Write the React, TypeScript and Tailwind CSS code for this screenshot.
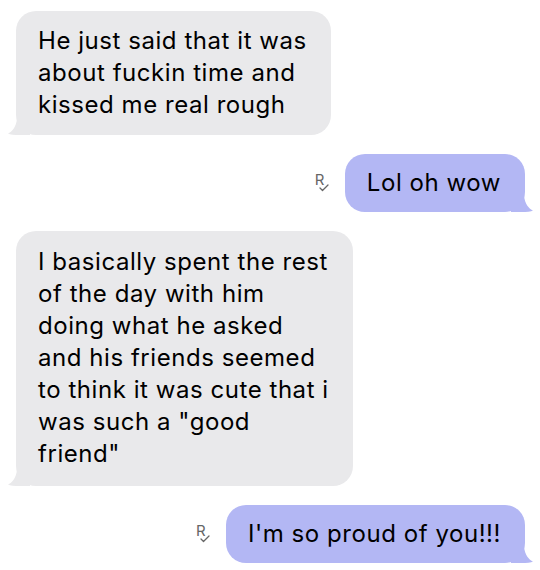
import type { ReactNode } from 'react';

function Tail({ side, color }: { side: 'left' | 'right'; color: string }): JSX.Element {
    if (side === 'left') {
        return (
            <svg className="absolute bottom-0 -left-[8px]" width="22" height="20" viewBox="0 0 22 20">
                <path d="M22 0 L22 20 L12 20 C6 20 2 19.5 0 18.5 C4 17 8 12 9 4 L9 0 Z" fill={color} />
            </svg>
        );
    }
    return (
        <svg className="absolute bottom-0 -right-[8px]" width="22" height="20" viewBox="0 0 22 20">
            <path d="M0 0 L0 20 L10 20 C16 20 20 19.5 22 18.5 C18 17 14 12 13 4 L13 0 Z" fill={color} />
        </svg>
    );
}

function ReadMark(): JSX.Element {
    return (
        <div className="relative w-[12px] h-[20px] text-[#666]">
            <span className="absolute left-0 top-0 text-[15px] leading-[14px]">R</span>
            <svg className="absolute left-[4px] top-[11px]" width="10" height="8" viewBox="0 0 10 8">
                <path d="M1 4 L3.5 6.5 L9 1" fill="none" stroke="#666" strokeWidth="1.3" strokeLinecap="round" strokeLinejoin="round" />
            </svg>
        </div>
    );
}

function Received({ children, tall }: { children: ReactNode; tall?: boolean }): JSX.Element {
    return (
        <div className="flex justify-start pl-[16px]">
            <div className={`relative bg-[#e9e9eb] rounded-[20px] pl-[22px] pr-[24px] text-[24px] leading-[32px] tracking-[0.55px] text-black whitespace-nowrap ${tall ? 'pt-[15px] pb-[16px]' : 'py-[14px]'}`}>
                {children}
                <Tail side="left" color="#e9e9eb" />
            </div>
        </div>
    );
}

function Sent({ children }: { children: ReactNode }): JSX.Element {
    return (
        <div className="flex justify-end items-center gap-[18px] pr-[15px]">
            <ReadMark />
            <div className="relative bg-[#b3b7f4] rounded-[20px] pl-[22px] pr-[24px] py-[13px] text-[24px] leading-[32px] tracking-[0.55px] text-black whitespace-nowrap">
                {children}
                <Tail side="right" color="#b3b7f4" />
            </div>
        </div>
    );
}

export default function App(): JSX.Element {
    return (
        <div className="w-[540px] h-[570px] bg-white overflow-hidden pt-[11px] flex flex-col gap-[19px] font-['Inter',sans-serif]">
            <Received>
                He just said that it was<br />
                about fuckin time and<br />
                kissed me real rough
            </Received>
            <Sent>Lol oh wow</Sent>
            <Received tall>
                I basically spent the rest<br />
                of the day with him<br />
                doing what he asked<br />
                and his friends seemed<br />
                to think it was cute that i<br />
                was such a "good<br />
                friend"
            </Received>
            <Sent>I'm so proud of you!!!</Sent>
        </div>
    );
}
